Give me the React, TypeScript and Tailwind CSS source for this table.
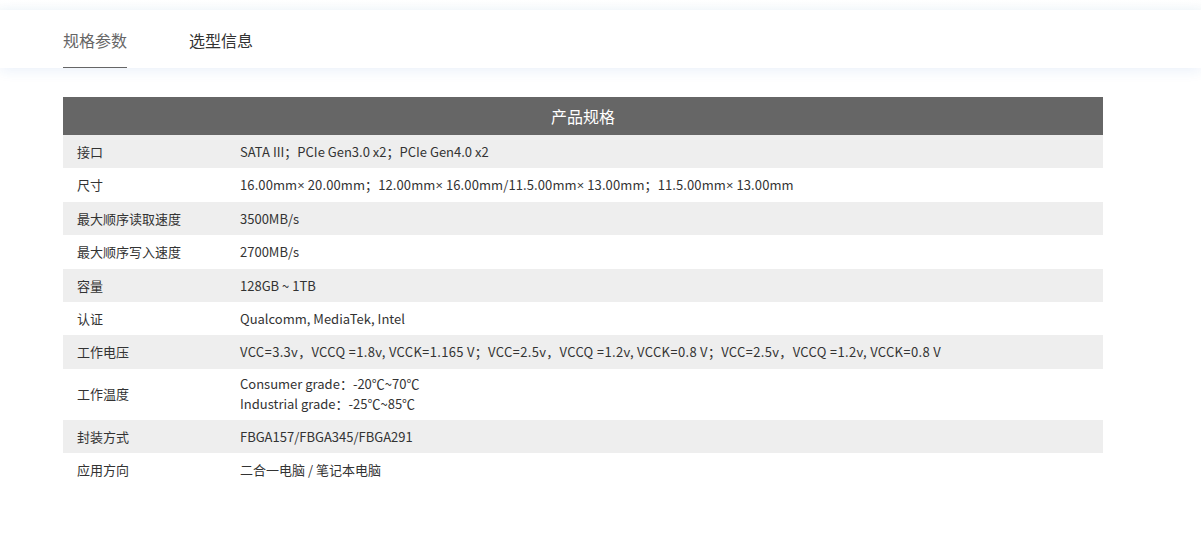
import React from "react";

function T({ s }: { s: string }) {
  const parts = s.split(/([=×])/);
  return (
    <>
      {parts.map((p, i) =>
        p === "=" || p === "×" ? (
          <span key={i} style={{ fontFamily: '"Open Sans", sans-serif' }}>
            {p}
          </span>
        ) : (
          <React.Fragment key={i}>{p}</React.Fragment>
        )
      )}
    </>
  );
}

const rows: { label: string; value: React.ReactNode; tall?: boolean; cls?: string }[] = [
  { label: "接口", value: "SATA III；PCIe Gen3.0 x2；PCIe Gen4.0 x2" },
  {
    label: "尺寸",
    value: <T s="16.00mm× 20.00mm；12.00mm× 16.00mm/11.5.00mm× 13.00mm；11.5.00mm× 13.00mm" />,
    cls: "tracking-[0.1px]",
  },
  { label: "最大顺序读取速度", value: "3500MB/s" },
  { label: "最大顺序写入速度", value: "2700MB/s" },
  { label: "容量", value: "128GB ~ 1TB" },
  { label: "认证", value: "Qualcomm, MediaTek, Intel" },
  {
    label: "工作电压",
    value: (
      <T s="VCC=3.3v，VCCQ =1.8v, VCCK=1.165 V；VCC=2.5v，VCCQ =1.2v, VCCK=0.8 V；VCC=2.5v，VCCQ =1.2v, VCCK=0.8 V" />
    ),
    cls: "tracking-[0.3px]",
  },
  {
    label: "工作温度",
    value: (
      <>
        <div>Consumer grade：-20℃~70℃</div>
        <div>Industrial grade：-25℃~85℃</div>
      </>
    ),
    tall: true,
  },
  { label: "封装方式", value: "FBGA157/FBGA345/FBGA291" },
  { label: "应用方向", value: "二合一电脑 / 笔记本电脑" },
];

export default function App() {
  return (
    <div
      className="w-[1201px] h-[541px] bg-white text-[#333]"
      style={{ fontFamily: '"Noto Sans CJK SC", "Noto Sans", sans-serif' }}
    >
      <div className="h-[10px] bg-gradient-to-b from-white to-[#fafcfc]" />
      <div className="relative h-[58px] bg-white shadow-[0_3px_12px_rgba(30,100,200,0.09)] flex items-end pl-[63px] gap-[62px]">
        <div className="h-[58px] flex flex-col justify-between">
          <div className="pt-[18px] text-[16px] leading-[24px] text-[#666]">规格参数</div>
          <div className="h-[1px] bg-[#666]" />
        </div>
        <div className="h-[58px]">
          <div className="pt-[18px] text-[16px] leading-[24px] text-[#333]">选型信息</div>
        </div>
      </div>
      <div className="pt-[29px] px-[63px]">
        <div className="w-[1040px]">
          <div className="h-[38px] bg-[#666] text-white text-[16px] flex items-center justify-center">
            产品规格
          </div>
          {rows.map((r, i) => (
            <div
              key={i}
              className={`flex items-center text-[13px] ${r.tall ? "h-[51px] leading-[20px]" : "h-[33.4px]"} ${
                i % 2 === 0 ? "bg-[#eeeeee]" : "bg-white"
              }`}
            >
              <div className="w-[177px] pl-[14px] shrink-0">{r.label}</div>
              <div className={r.cls}>{r.value}</div>
            </div>
          ))}
        </div>
      </div>
    </div>
  );
}
